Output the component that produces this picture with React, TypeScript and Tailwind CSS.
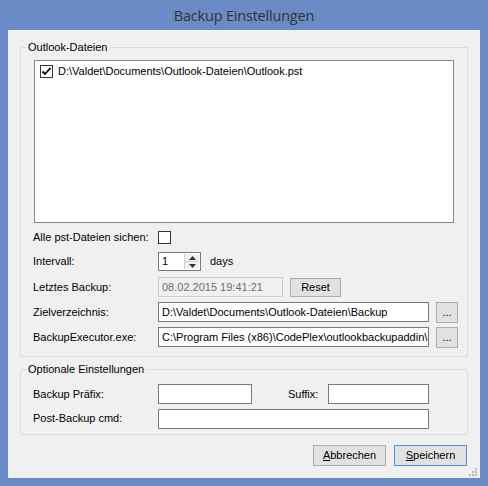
import React from 'react';

// Windows-style "Backup Einstellungen" dialog
const font = { fontFamily: '"Liberation Sans", Arial, sans-serif' };

function CheckBox({ checked }: { checked?: boolean }) {
  return (
    <div className="w-[13px] h-[13px] shrink-0 border border-[#333333] bg-white flex items-center justify-center">
      {checked && (
        <svg width="11" height="11" viewBox="0 0 11 11">
          <path d="M1.5 5.5 L4 8 L9.5 2" fill="none" stroke="#000" strokeWidth="1.8" />
        </svg>
      )}
    </div>
  );
}

function TextBox({ value, width, className = '' }: { value?: string; width: string; className?: string }) {
  return (
    <div className={`${width} h-[20px] shrink-0 border border-[#7a7a7a] bg-white pl-[3px] flex items-center overflow-hidden whitespace-nowrap ${className}`}>
      {value && <span className="block overflow-hidden">{value}</span>}
    </div>
  );
}

function Button({ children, className = '' }: { children: React.ReactNode; className?: string }) {
  return (
    <div className={`shrink-0 border border-[#adadad] bg-[#e1e1e1] flex items-center justify-center ${className}`}>
      {children}
    </div>
  );
}

function Group({ title, children, className = '' }: { title: string; children: React.ReactNode; className?: string }) {
  return (
    <fieldset className={`ml-[12px] w-[448px] border border-[#dcdcdc] rounded-[2px] ${className}`}>
      <legend className="ml-[5px] px-[2px] leading-[13px]">{title}</legend>
      {children}
    </fieldset>
  );
}

export default function App() {
  return (
    <div className="w-[488px] h-[486px] bg-[#6b8bc7] flex flex-col text-[11px] text-black" style={font}>
      <div
        className="h-[30px] flex items-center justify-center text-[14.5px] tracking-[-0.2px] text-[#333333] pt-[2px]"
        style={{ fontFamily: '"Open Sans", "Noto Sans", sans-serif' }}
      >
        Backup Einstellungen
      </div>
      <div className="ml-[8px] w-[472px] h-[448px] bg-[#f0f0f0] relative flex flex-col">
        <Group title="Outlook-Dateien" className="mt-[11px]">
          <div className="pl-[12px] pt-[6px] pb-[7px] flex flex-col">
            <div className="ml-px w-[420px] h-[163px] border border-[#828790] bg-white pt-[2px] pl-[5px]">
              <div className="h-[17px] flex items-center gap-[5px]">
                <CheckBox checked />
                <span>D:\Valdet\Documents\Outlook-Dateien\Outlook.pst</span>
              </div>
            </div>

            <div className="mt-[8px] h-[13px] flex items-center">
              <span className="w-[125px]">Alle pst-Dateien sichen:</span>
              <CheckBox />
            </div>

            <div className="mt-[8px] h-[19px] flex items-center">
              <span className="w-[125px]">Intervall:</span>
              <div className="w-[43px] h-[19px] border border-[#7a7a7a] bg-white flex">
                <span className="flex-1 pl-[3px] flex items-center">1</span>
                <div className="w-[15px] flex flex-col border-l border-[#d0d0d0] my-px mr-px">
                  <div className="flex-1 bg-[#f0f0f0] border-b border-[#d0d0d0] flex items-center justify-center">
                    <svg width="7" height="4" viewBox="0 0 7 4"><path d="M0 4 L3.5 0 L7 4 Z" fill="#333" /></svg>
                  </div>
                  <div className="flex-1 bg-[#f0f0f0] flex items-center justify-center">
                    <svg width="7" height="4" viewBox="0 0 7 4"><path d="M0 0 L3.5 4 L7 0 Z" fill="#333" /></svg>
                  </div>
                </div>
              </div>
              <span className="ml-[9px]">days</span>
            </div>

            <div className="mt-[6px] h-[20px] flex items-center">
              <span className="w-[125px]">Letztes Backup:</span>
              <div className="w-[125px] h-[20px] border border-[#cccccc] bg-[#f0f0f0] pl-[3px] flex items-center text-[#6d6d6d]">
                08.02.2015 19:41:21
              </div>
              <Button className="ml-[7px] w-[51px] h-[19px]">Reset</Button>
            </div>

            <div className="mt-[5px] h-[22px] flex items-start">
              <span className="w-[125px] h-[20px] flex items-center">Zielverzeichnis:</span>
              <TextBox width="w-[271px]" value="D:\Valdet\Documents\Outlook-Dateien\Backup" />
              <Button className="ml-[7px] w-[22px] h-[21px]">...</Button>
            </div>

            <div className="mt-[3px] h-[22px] flex items-start">
              <span className="w-[125px] h-[20px] flex items-center">BackupExecutor.exe:</span>
              <TextBox width="w-[271px]" value="C:\Program Files (x86)\CodePlex\outlookbackupaddin\BackupExecutor.exe" />
              <Button className="ml-[7px] w-[22px] h-[21px]">...</Button>
            </div>
          </div>
        </Group>

        <Group title="Optionale Einstellungen" className="mt-[6px]">
          <div className="pl-[12px] pt-[8px] pb-[6px] flex flex-col">
            <div className="h-[20px] flex items-center">
              <span className="w-[125px]">Backup Präfix:</span>
              <TextBox width="w-[94px]" />
              <span className="ml-[36px] w-[40px]">Suffix:</span>
              <TextBox width="w-[101px]" />
            </div>
            <div className="mt-[5px] h-[19px] flex items-center">
              <span className="w-[125px]">Post-Backup cmd:</span>
              <TextBox width="w-[271px]" className="h-[19px]" />
            </div>
          </div>
        </Group>

        <div className="mt-[10px] mr-[13px] flex justify-end gap-[8px]">
          <Button className="w-[73px] h-[21px]"><span><u>A</u>bbrechen</span></Button>
          <Button className="w-[73px] h-[21px] !border-[#3d96e8]"><span><u>S</u>peichern</span></Button>
        </div>

        <svg className="absolute right-[3px] bottom-[2px]" width="8" height="8" viewBox="0 0 8 8">
          <g fill="#b8b8b8">
            <rect x="6" y="0" width="2" height="2" />
            <rect x="3" y="3" width="2" height="2" />
            <rect x="6" y="3" width="2" height="2" />
            <rect x="0" y="6" width="2" height="2" />
            <rect x="3" y="6" width="2" height="2" />
            <rect x="6" y="6" width="2" height="2" />
          </g>
        </svg>
      </div>
    </div>
  );
}
